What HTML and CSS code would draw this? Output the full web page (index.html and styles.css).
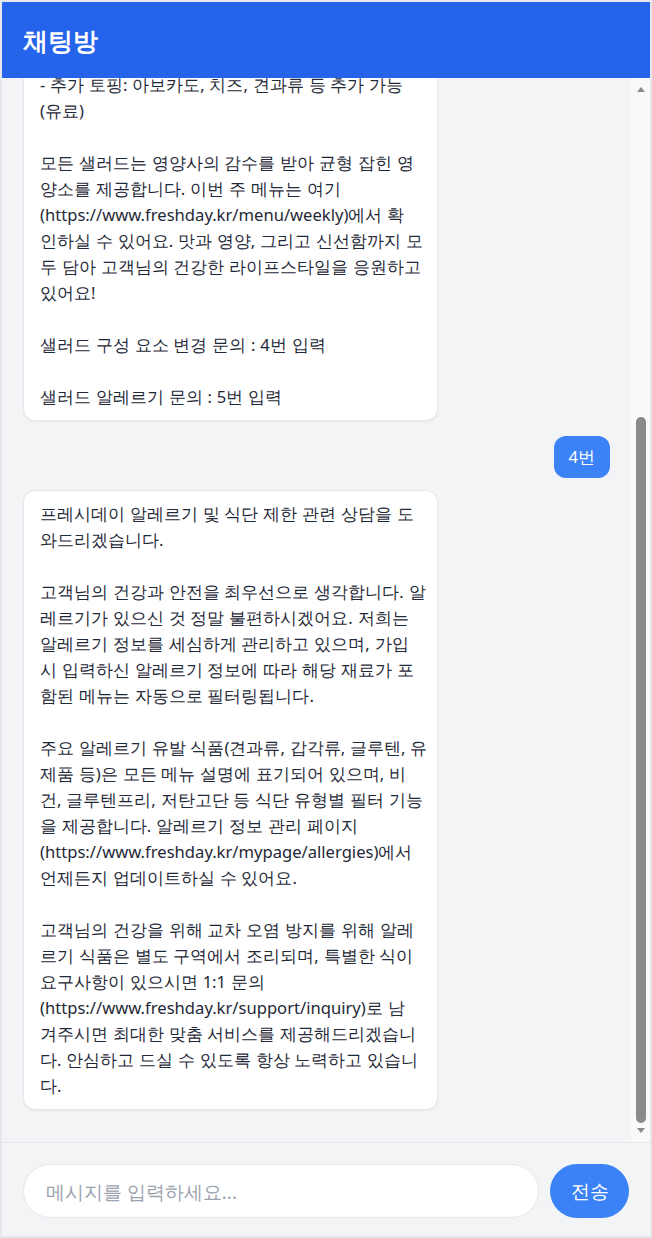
FILE: index.html
```html
<!DOCTYPE html>
<html lang="ko">
<head>
  <meta charset="UTF-8">
  <title>채팅방</title>
  <link rel="stylesheet" href="styles.css">
</head>
<body>
  <div class="chat-app">
    <header class="chat-header">채팅방</header>

    <div class="chat-body">
      <div class="chat-scroll">
        <div class="message-list">
          <div class="msg user">3번</div>
          <div class="msg bot">프레시데이 샐러드 메뉴 안내입니다.

매일 아침 산지에서 직송한 신선한 채소로 샐러드
를 만들고 있어요. 원하시는 재료를 골라 나만의
샐러드를 구성하실 수도 있습니다.

- 베이스: 로메인, 케일, 시금치, 양상추 중 선택
- 단백질: 닭가슴살, 훈제연어, 두부, 삶은 달걀
중 선택
- 드레싱: 오리엔탈, 발사믹, 요거트, 참깨 중 선택
- 추가 토핑: 아보카도, 치즈, 견과류 등 추가 가능
(유료)

모든 샐러드는 영양사의 감수를 받아 균형 잡힌 영
양소를 제공합니다. 이번 주 메뉴는 여기
(https://www.freshday.kr/menu/weekly)에서 확
인하실 수 있어요. 맛과 영양, 그리고 신선함까지 모
두 담아 고객님의 건강한 라이프스타일을 응원하고
있어요!

샐러드 구성 요소 변경 문의 : 4번 입력

샐러드 알레르기 문의 : 5번 입력</div>
          <div class="msg user">4번</div>
          <div class="msg bot">프레시데이 알레르기 및 식단 제한 관련 상담을 도
와드리겠습니다.

고객님의 건강과 안전을 최우선으로 생각합니다. 알
레르기가 있으신 것 정말 불편하시겠어요. 저희는
알레르기 정보를 세심하게 관리하고 있으며, 가입
시 입력하신 알레르기 정보에 따라 해당 재료가 포
함된 메뉴는 자동으로 필터링됩니다.

주요 알레르기 유발 식품(견과류, 갑각류, 글루텐, 유
제품 등)은 모든 메뉴 설명에 표기되어 있으며, 비
건, 글루텐프리, 저탄고단 등 식단 유형별 필터 기능
을 제공합니다. 알레르기 정보 관리 페이지
(https://www.freshday.kr/mypage/allergies)에서
언제든지 업데이트하실 수 있어요.

고객님의 건강을 위해 교차 오염 방지를 위해 알레
르기 식품은 별도 구역에서 조리되며, 특별한 식이
요구사항이 있으시면 1:1 문의
(https://www.freshday.kr/support/inquiry)로 남
겨주시면 최대한 맞춤 서비스를 제공해드리겠습니
다. 안심하고 드실 수 있도록 항상 노력하고 있습니
다.</div>
        </div>
      </div>

      <div class="scrollbar">
        <span class="sb-arrow up"></span>
        <div class="sb-track">
          <div class="sb-thumb"></div>
        </div>
        <span class="sb-arrow down"></span>
      </div>
    </div>

    <form class="chat-input" onsubmit="return false">
      <input type="text" placeholder="메시지를 입력하세요...">
      <button type="submit">전송</button>
    </form>
  </div>
</body>
</html>
```

FILE: styles.css
```css
* {
  margin: 0;
  padding: 0;
  box-sizing: border-box;
}

body {
  font-family: "Noto Sans", sans-serif;
  color: #1f2937;
  background: #fff;
}

.chat-app {
  height: 100vh;
  display: flex;
  flex-direction: column;
  border: 2px solid #e5e7eb;
  background: #f3f4f6;
}

.chat-header {
  background: #2563eb;
  color: #fff;
  font-size: 25px;
  font-weight: 700;
  line-height: 36px;
  padding: 20px 21px;
}

.chat-body {
  flex: 1;
  min-height: 0;
  display: flex;
}

.chat-scroll {
  flex: 1;
  overflow: hidden;
  display: flex;
  flex-direction: column-reverse;
}

.message-list {
  display: flex;
  flex-direction: column;
  padding: 20px 21px;
}

.msg {
  font-size: 16.6px;
  line-height: 26px;
  word-spacing: 0.5px;
  white-space: pre;
  margin-bottom: 12px;
  border-radius: 12px;
}

.msg.bot {
  align-self: flex-start;
  width: 70.7%;
  background: #fff;
  border: 1px solid #e5e7eb;
  padding: 10px 16px;
  box-shadow: 0 1px 2px rgba(0, 0, 0, 0.05);
}

.msg.user {
  align-self: flex-end;
  background: #3b82f6;
  color: #fff;
  padding: 8px 15px;
  margin-top: 3px;
}

/* scrollbar as the reference browser draws it */
.scrollbar {
  width: 19px;
  display: flex;
  flex-direction: column;
  background: #f9f9f9;
}

.sb-arrow {
  height: 17px;
  display: flex;
  justify-content: center;
  align-items: center;
}

.sb-arrow::before {
  content: "";
  border-left: 4.5px solid transparent;
  border-right: 4.5px solid transparent;
}

.sb-arrow.up::before {
  border-bottom: 5px solid #8a8a8a;
  margin-top: 6px;
}

.sb-arrow.down::before {
  border-top: 5px solid #8a8a8a;
  margin-bottom: 6px;
}

.sb-track {
  flex: 1;
  display: flex;
  flex-direction: column;
  justify-content: flex-end;
  align-items: center;
  padding-bottom: 2px;
}

.sb-thumb {
  width: 10px;
  height: 706px;
  border-radius: 5px;
  background: #8a8a8a;
}

.chat-input {
  display: flex;
  gap: 11px;
  padding: 21px 21px 18px;
  border-top: 1px solid #e5e7eb;
  background: #f3f4f6;
}

.chat-input input {
  flex: 1;
  height: 54px;
  padding: 0 22px;
  font-family: inherit;
  font-size: 18.7px;
  color: #1f2937;
  background: #fff;
  border: 1px solid #e5e7eb;
  border-radius: 9999px;
  outline: none;
}

.chat-input input::placeholder {
  color: #9ca3af;
}

.chat-input button {
  width: 79px;
  height: 54px;
  font-family: inherit;
  font-size: 18.7px;
  color: #fff;
  background: #3b82f6;
  border: none;
  border-radius: 9999px;
  cursor: pointer;
}
```
